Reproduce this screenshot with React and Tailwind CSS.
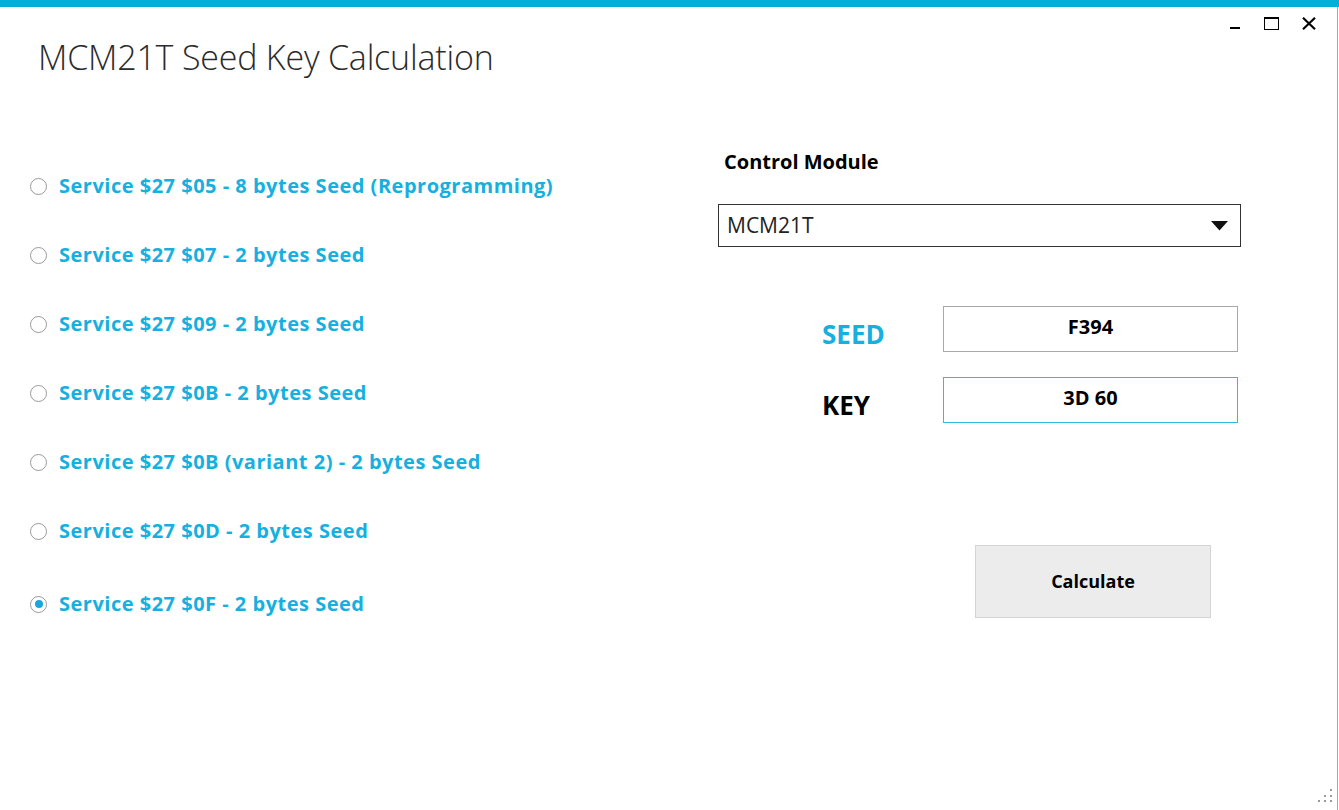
import React from "react";

const options = [
  "Service $27 $05 - 8 bytes Seed (Reprogramming)",
  "Service $27 $07 - 2 bytes Seed",
  "Service $27 $09 - 2 bytes Seed",
  "Service $27 $0B - 2 bytes Seed",
  "Service $27 $0B (variant 2) - 2 bytes Seed",
  "Service $27 $0D - 2 bytes Seed",
  "Service $27 $0F - 2 bytes Seed",
];

function Radio({ checked }) {
  return (
    <span className="w-[17px] h-[17px] rounded-full border border-[#9a9a9a] bg-white flex items-center justify-center shrink-0">
      {checked && <span className="w-[8px] h-[8px] rounded-full bg-[#1aa6dc]" />}
    </span>
  );
}

export default function App() {
  const font = { fontFamily: '"Open Sans", "Noto Sans", sans-serif' };
  return (
    <div style={font} className="w-[1339px] h-[810px] bg-white relative overflow-hidden">
      <div className="h-[7px] bg-[#00aedb]" />
      <div className="w-[1338px] h-[803px] border-r border-[#a8a8a8] flex flex-col">
        {/* header */}
        <div className="h-[93px] flex items-start justify-between">
          <h1 className="pl-[38px] pt-[28px] text-[34px] leading-[44px] font-light text-[#2b2b2b] tracking-[-0.2px] whitespace-nowrap">
            MCM21T Seed Key Calculation
          </h1>
          <div className="flex items-start pt-[10px] pr-[20px]">
            <span className="block w-[10px] h-[2px] bg-black mt-[10px]" />
            <span className="block w-[15px] h-[13px] border border-black border-t-2 ml-[24px]" />
            <svg className="ml-[22px]" width="16" height="13" viewBox="0 0 16 13">
              <path d="M2 0.8 L14 12.2 M14 0.8 L2 12.2" stroke="#000" strokeWidth="2.2" />
            </svg>
          </div>
        </div>

        {/* content */}
        <div className="flex flex-1 pl-[30px]">
          <div className="w-[688px] pt-[74px] flex flex-col">
            {options.map((o, i) => (
              <div
                key={o}
                className={`flex items-center gap-[12px] h-[24px] ${i === 0 ? "" : i === 6 ? "mt-[49px]" : "mt-[45px]"}`}
              >
                <Radio checked={i === 6} />
                <span className="text-[20px] font-bold text-[#16b0e0] whitespace-nowrap tracking-[0.5px]">{o}</span>
              </div>
            ))}
          </div>

          <div className="w-[523px] pt-[50px] flex flex-col">
            <div className="pl-[6px] h-[24px] flex items-center text-[20px] font-bold text-black whitespace-nowrap">Control Module</div>
            <div className="mt-[30px] h-[43px] border border-[#333] flex items-center justify-between pl-[8px] pr-[12px]">
              <span className="text-[21px] text-[#222]">MCM21T</span>
              <svg width="17" height="10" viewBox="0 0 17 10">
                <path d="M0 0 H17 L8.5 9.5 Z" fill="#111" />
              </svg>
            </div>

            <div className="mt-[59px] flex items-start pl-[104px]">
              <div className="w-[121px] pt-[11px] text-[26px] leading-[35px] font-bold text-[#16b0e0]">SEED</div>
              <div className="w-[295px] h-[46px] border border-[#a8a8a8] flex items-center justify-center pb-[5px] text-[20px] font-bold text-black">
                F394
              </div>
            </div>
            <div className="mt-[25px] flex items-start pl-[104px]">
              <div className="w-[121px] pt-[11px] text-[26px] leading-[35px] font-bold text-black">KEY</div>
              <div className="w-[295px] h-[46px] border border-[#2bbbe3] flex items-center justify-center pb-[5px] text-[20px] font-bold text-black">
                3D 60
              </div>
            </div>

            <div className="mt-[122px] pl-[257px]">
              <button className="w-[236px] h-[73px] bg-[#ececec] border border-[#d4d4d4] text-[18px] font-bold text-black flex items-center justify-center">
                Calculate
              </button>
            </div>
          </div>
        </div>
      </div>

      {/* resize grip */}
      <svg className="absolute right-[7px] bottom-[7px]" width="14" height="14" viewBox="0 0 14 14">
        <rect x="12" y="0" width="2" height="2" fill="#9a9a9a" />
        <rect x="6" y="6" width="2" height="2" fill="#9a9a9a" />
        <rect x="12" y="6" width="2" height="2" fill="#9a9a9a" />
        <rect x="0" y="11" width="2" height="2" fill="#9a9a9a" />
        <rect x="6" y="11" width="2" height="2" fill="#9a9a9a" />
        <rect x="12" y="11" width="2" height="2" fill="#9a9a9a" />
      </svg>
    </div>
  );
}
